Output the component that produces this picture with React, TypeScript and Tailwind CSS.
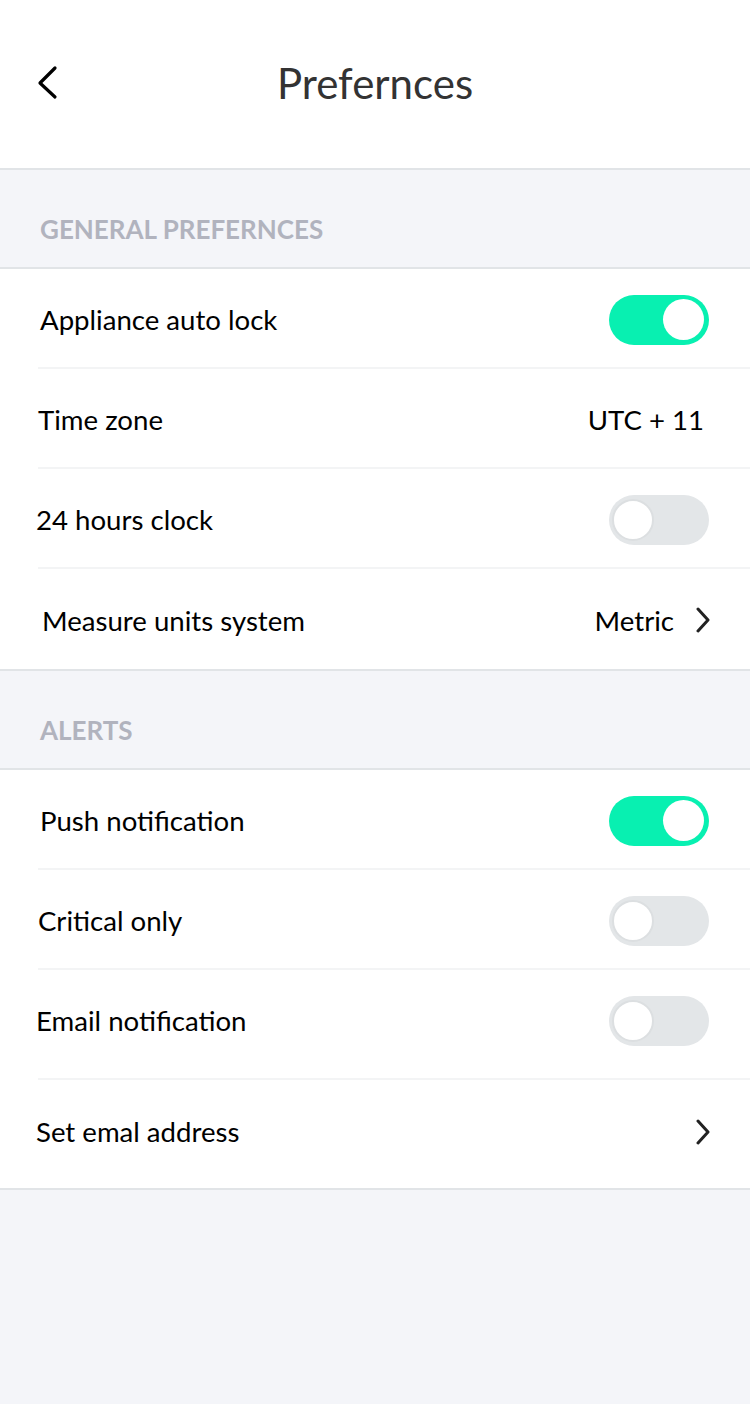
type Row = {
  label: string
  pad: string
  h?: string
  kind: 'on' | 'off' | 'value' | 'link'
  value?: string
  last?: boolean
}

const general: Row[] = [
  { label: 'Appliance auto lock', pad: 'pl-[40px]', kind: 'on' },
  { label: 'Time zone', pad: 'pl-[38px]', kind: 'value', value: 'UTC + 11' },
  { label: '24 hours clock', pad: 'pl-[36px]', kind: 'off' },
  { label: 'Measure units system', pad: 'pl-[42px]', kind: 'link', value: 'Metric', last: true },
]

const alerts: Row[] = [
  { label: 'Push notification', pad: 'pl-[40px]', kind: 'on' },
  { label: 'Critical only', pad: 'pl-[38px]', kind: 'off' },
  { label: 'Email notification', pad: 'pl-[36px]', kind: 'off', h: 'h-[110px] pb-[10px]' },
  { label: 'Set emal address', pad: 'pl-[36px]', kind: 'link', h: 'h-[108px] pb-[8px]', last: true },
]

const Toggle = ({ on }: { on: boolean }) => (
  <div
    className={
      on
        ? 'w-[100px] h-[50px] rounded-full bg-[#08f0b1] flex items-center justify-end pr-[5px]'
        : 'w-[100px] h-[50px] rounded-full bg-[#e3e6e8] flex items-center pl-[3px]'
    }
  >
    <span
      className={
        on
          ? 'w-[41px] h-[41px] rounded-full bg-white'
          : 'w-[42px] h-[42px] rounded-full bg-white border-2 border-[#dcdfe1]'
      }
    />
  </div>
)

const Chevron = () => (
  <svg width="14" height="26" viewBox="0 0 14 26" className="-mr-[1px]">
    <path d="M2 2 L12 13 L2 24" fill="none" stroke="#222" strokeWidth="3" strokeLinecap="round" strokeLinejoin="round" />
  </svg>
)

const SettingRow = ({ row }: { row: Row }) => (
  <div className="pl-[38px]">
    <div
      className={`flex items-center justify-between pr-[41px] pt-[3px] ${row.h ?? 'h-[100px]'} ${
        row.last ? '' : 'border-b-2 border-[#f3f4f5]'
      }`}
    >
      <span className={`${row.pad} -ml-[38px] text-[27.6px] text-black`}>{row.label}</span>
      {row.kind === 'on' && <Toggle on />}
      {row.kind === 'off' && <Toggle on={false} />}
      {row.kind === 'value' && <span className="text-[27.6px] text-black pr-[5px]">{row.value}</span>}
      {row.kind === 'link' && (
        <div className="flex items-center gap-[22px]">
          {row.value && <span className="text-[27.6px] text-black">{row.value}</span>}
          <Chevron />
        </div>
      )}
    </div>
  </div>
)

const SectionHead = ({ title }: { title: string }) => (
  <div className="h-[101px] bg-[#f4f5f9] border-y-2 border-[#e1e4e7] flex items-center pl-[40px] pt-[22px]">
    <span className="text-[26px] font-bold text-[#b1b3be]">{title}</span>
  </div>
)

export default function App() {
  return (
    <main className="w-[750px] min-h-[1404px] bg-[#f4f5f9] font-['Lato',sans-serif]">
      <header className="relative h-[168px] bg-white flex items-center justify-center">
        <svg width="24" height="36" viewBox="0 0 24 36" className="absolute left-[37px] top-[65px]">
          <path d="M18 3 L3 18 L18 32" fill="none" stroke="#000" strokeWidth="3.2" strokeLinecap="round" strokeLinejoin="round" />
        </svg>
        <h1 className="text-[42px] text-[#333] pb-[2px]">Prefernces</h1>
      </header>
      <SectionHead title="GENERAL PREFERNCES" />
      <section className="bg-white">
        {general.map((r) => (
          <SettingRow key={r.label} row={r} />
        ))}
      </section>
      <SectionHead title="ALERTS" />
      <section className="bg-white border-b-2 border-[#e1e4e7]">
        {alerts.map((r) => (
          <SettingRow key={r.label} row={r} />
        ))}
      </section>
    </main>
  )
}
